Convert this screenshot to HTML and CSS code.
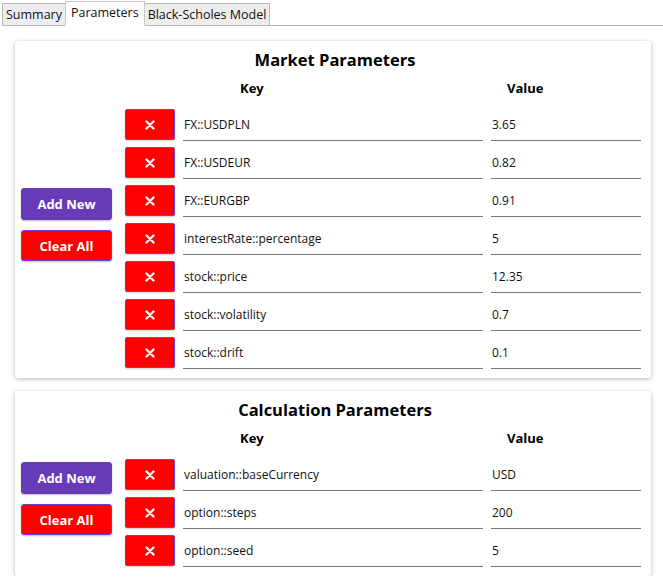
FILE: index.html
```html
<!DOCTYPE html>
<html>
<head>
<meta charset="utf-8">
<link rel="stylesheet" href="styles.css">
</head>
<body>
<div class="tabs">
  <div class="tab">Summary</div>
  <div class="tab active">Parameters</div>
  <div class="tab">Black-Scholes Model</div>
  <div class="tab-fill"></div>
</div>
<div class="content">
  <section class="card">
    <h2 class="title">Market Parameters</h2>
    <div class="body">
      <div class="actions">
        <button class="btn add">Add New</button>
        <button class="btn clear">Clear All</button>
      </div>
      <div class="table">
        <div class="head"><span class="h-key">Key</span><span class="h-val">Value</span></div>
        <div class="row"><button class="del"><svg class="x" viewBox="0 0 10 10"><path d="M1.5 1.5L8.5 8.5M8.5 1.5L1.5 8.5"/></svg></button><div class="field key">FX::USDPLN</div><div class="field val">3.65</div></div>
        <div class="row"><button class="del"><svg class="x" viewBox="0 0 10 10"><path d="M1.5 1.5L8.5 8.5M8.5 1.5L1.5 8.5"/></svg></button><div class="field key">FX::USDEUR</div><div class="field val">0.82</div></div>
        <div class="row"><button class="del"><svg class="x" viewBox="0 0 10 10"><path d="M1.5 1.5L8.5 8.5M8.5 1.5L1.5 8.5"/></svg></button><div class="field key">FX::EURGBP</div><div class="field val">0.91</div></div>
        <div class="row"><button class="del"><svg class="x" viewBox="0 0 10 10"><path d="M1.5 1.5L8.5 8.5M8.5 1.5L1.5 8.5"/></svg></button><div class="field key">interestRate::percentage</div><div class="field val">5</div></div>
        <div class="row"><button class="del"><svg class="x" viewBox="0 0 10 10"><path d="M1.5 1.5L8.5 8.5M8.5 1.5L1.5 8.5"/></svg></button><div class="field key">stock::price</div><div class="field val">12.35</div></div>
        <div class="row"><button class="del"><svg class="x" viewBox="0 0 10 10"><path d="M1.5 1.5L8.5 8.5M8.5 1.5L1.5 8.5"/></svg></button><div class="field key">stock::volatility</div><div class="field val">0.7</div></div>
        <div class="row"><button class="del"><svg class="x" viewBox="0 0 10 10"><path d="M1.5 1.5L8.5 8.5M8.5 1.5L1.5 8.5"/></svg></button><div class="field key">stock::drift</div><div class="field val">0.1</div></div>
      </div>
    </div>
  </section>
  <section class="card">
    <h2 class="title">Calculation Parameters</h2>
    <div class="body">
      <div class="actions">
        <button class="btn add">Add New</button>
        <button class="btn clear">Clear All</button>
      </div>
      <div class="table">
        <div class="head"><span class="h-key">Key</span><span class="h-val">Value</span></div>
        <div class="row"><button class="del"><svg class="x" viewBox="0 0 10 10"><path d="M1.5 1.5L8.5 8.5M8.5 1.5L1.5 8.5"/></svg></button><div class="field key">valuation::baseCurrency</div><div class="field val">USD</div></div>
        <div class="row"><button class="del"><svg class="x" viewBox="0 0 10 10"><path d="M1.5 1.5L8.5 8.5M8.5 1.5L1.5 8.5"/></svg></button><div class="field key">option::steps</div><div class="field val">200</div></div>
        <div class="row"><button class="del"><svg class="x" viewBox="0 0 10 10"><path d="M1.5 1.5L8.5 8.5M8.5 1.5L1.5 8.5"/></svg></button><div class="field key">option::seed</div><div class="field val">5</div></div>
      </div>
    </div>
  </section>
</div>
</body>
</html>
```

FILE: styles.css
```css
* { box-sizing: border-box; }
html, body { margin: 0; padding: 0; background: #fff; }
body {
  font-family: "Open Sans", "Noto Sans", sans-serif;
  font-size: 12px;
  color: #111;
}
.tabs {
  display: flex;
  align-items: flex-end;
  height: 26px;
  padding-left: 2px;
}
.tab {
  height: 23px;
  padding: 0 3px;
  line-height: 21px;
  font-size: 12.5px;
  background: #ededed;
  border: 1px solid #b9b9b9;
  margin-right: -1px;
  color: #111;
}
.tab.active {
  height: 25px;
  line-height: 22px;
  background: #fff;
  border-color: #c8c8c8;
  border-bottom-color: #fff;
  padding: 0 5px;
  position: relative;
  z-index: 1;
}
.tab-fill {
  flex: 1;
  border-bottom: 1px solid #b9b9b9;
}
.content {
  padding: 15px 12px 0 15px;
  display: flex;
  flex-direction: column;
  gap: 13px;
}
.card {
  background: #fff;
  border-radius: 3px;
  box-shadow: 0 1px 4px rgba(0,0,0,0.28);
  padding: 8px 10px 10px 6px;
}
.title {
  margin: 0;
  text-align: center;
  font-size: 16.5px;
  font-weight: 700;
  line-height: 22px;
  color: #000;
  padding-left: 8px;
}
.body {
  display: flex;
  align-items: center;
  gap: 13px;
}
.actions {
  width: 91px;
  display: flex;
  flex-direction: column;
  gap: 10px;
  padding-top: 10px;
}
.btn {
  height: 32px;
  border: 1px solid #5a40c8;
  border-radius: 3px;
  color: #fff;
  font-family: inherit;
  font-weight: 700;
  font-size: 13px;
  box-shadow: 0 1px 2px rgba(0,0,0,0.25);
  padding: 0;
}
.add { background: #673ab7; border-color: #673ab7; }
.clear { background: #ff0000; border-color: #6a3fd8; height: 31px; }
.table {
  flex: 1;
  display: flex;
  flex-direction: column;
  gap: 7px;
}
.head {
  display: flex;
  height: 30px;
  margin-top: 2px;
  margin-bottom: -1px;
  align-items: center;
  font-weight: 700;
  font-size: 13px;
  color: #000;
}
.h-key { margin-left: 115px; width: 267px; }
.row {
  display: flex;
  gap: 8px;
  height: 31px;
}
.del {
  width: 50px;
  height: 31px;
  background: #ff0000;
  border: 1px solid #5b4ad8;
  border-radius: 2px;
  padding: 0;
  box-shadow: 0 1px 2px rgba(0,0,0,0.2);
  display: flex;
  align-items: center;
  justify-content: center;
}
.x {
  width: 10px;
  height: 10px;
  fill: none;
  stroke: #fff2f2;
  stroke-width: 2.4;
  stroke-linecap: round;
}
.field {
  height: 32px;
  border-bottom: 1px solid #777;
  padding: 6px 1px 0 1px;
  line-height: 20px;
  color: #111;
}
.key { width: 300px; }
.val { width: 150px; }
```
